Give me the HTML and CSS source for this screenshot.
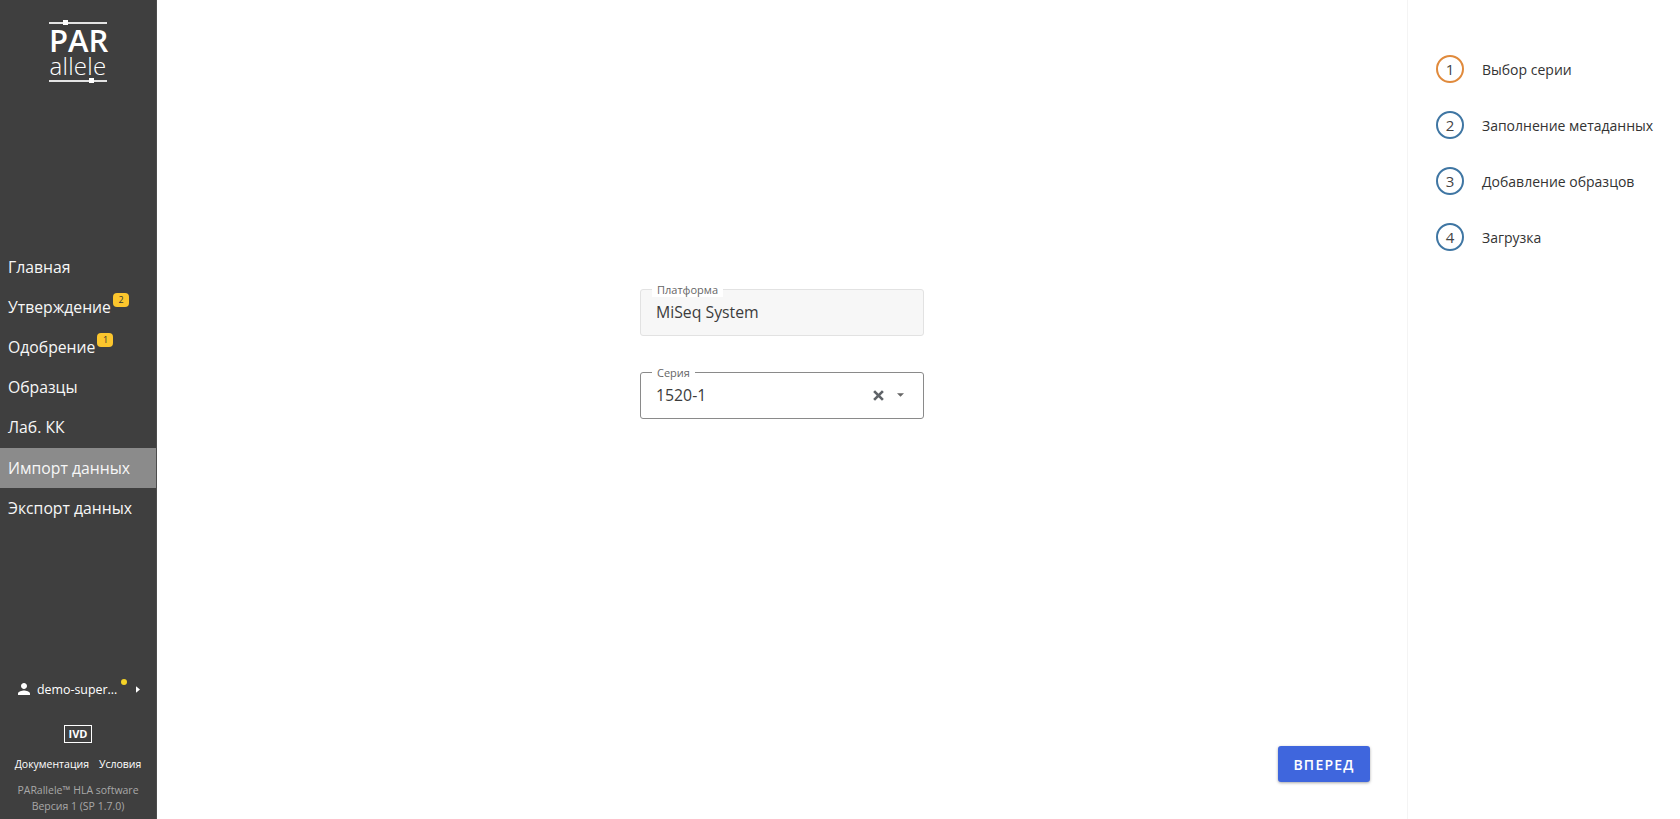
FILE: index.html
```html
<!DOCTYPE html>
<html lang="en">
<head>
  <meta charset="UTF-8">
  <title>PARallele</title>
  <link rel="stylesheet" href="styles.css">
</head>
<body>
  <div class="app">
    <!-- Sidebar -->
    <aside class="sidebar">
      <div class="logo">
        <div class="logo-line logo-line-top"><span class="logo-dot"></span></div>
        <div class="logo-par">PAR</div>
        <div class="logo-allele">allele</div>
        <div class="logo-line logo-line-bottom"><span class="logo-dot"></span></div>
      </div>

      <nav class="nav">
        <a class="nav-item">Главная</a>
        <a class="nav-item">Утверждение<span class="nav-badge">2</span></a>
        <a class="nav-item">Одобрение<span class="nav-badge">1</span></a>
        <a class="nav-item">Образцы</a>
        <a class="nav-item">Лаб. КК</a>
        <a class="nav-item nav-item-active">Импорт данных</a>
        <a class="nav-item">Экспорт данных</a>
      </nav>

      <div class="user">
        <svg class="user-icon" viewBox="0 0 24 24" width="18" height="18"><path fill="#fff" d="M12 12c2.2 0 4-1.8 4-4s-1.800-4-4-4-4 1.800-4 4 1.800 4 4 4zm0 2c-2.700 0-8 1.300-8 4v2h16v-2c0-2.700-5.300-4-8-4z"/></svg>
        <span class="user-name">demo-super...</span>
        <span class="user-dot"></span>
        <svg class="user-arrow" viewBox="0 0 6 10" width="4" height="7"><path fill="#fff" d="M0 0l6 5-6 5z"/></svg>
      </div>

      <div class="ivd">IVD</div>

      <div class="links">
        <a>Документация</a>
        <a>Условия</a>
      </div>

      <div class="about">
        <div>PARallele™ HLA software</div>
        <div>Версия 1 (SP 1.7.0)</div>
      </div>
    </aside>

    <!-- Main form -->
    <main class="main">
      <div class="form">
        <div class="field field-disabled">
          <span class="field-label">Платформа</span>
          <span class="field-value">MiSeq System</span>
        </div>
        <div class="field field-select">
          <span class="field-label">Серия</span>
          <span class="field-value">1520-1</span>
          <svg class="field-clear" viewBox="0 0 10 10" width="11" height="11"><path stroke="#5f6368" stroke-width="2.400" d="M1 1l8 8M9 1l-8 8"/></svg>
          <svg class="field-caret" viewBox="0 0 10 5" width="7" height="4"><path fill="#666" d="M0 0l5 5 5-5z"/></svg>
        </div>
      </div>
      <div class="actions">
        <button class="btn-next">ВПЕРЕД</button>
      </div>
    </main>

    <!-- Steps -->
    <aside class="steps">
      <div class="step step-current"><span class="step-num">1</span><span>Выбор серии</span></div>
      <div class="step"><span class="step-num">2</span><span>Заполнение метаданных</span></div>
      <div class="step"><span class="step-num">3</span><span>Добавление образцов</span></div>
      <div class="step"><span class="step-num">4</span><span>Загрузка</span></div>
    </aside>
  </div>
</body>
</html>
```

FILE: styles.css
```css
* {
  box-sizing: border-box;
}
body {
  margin: 0;
  font-family: "Open Sans", "Noto Sans", sans-serif;
  color: #333;
  background: #fff;
}
.app {
  display: flex;
  height: 819px;
  overflow: hidden;
}

.sidebar {
  width: 157px;
  flex-shrink: 0;
  background: #3f3f3f;
  color: #fff;
  display: flex;
  flex-direction: column;
  border-right: 1px solid #4d4d4d;
}
.logo {
  width: 58px;
  margin: 22px auto 0;
  height: 225px;
  color: #fff;
  text-align: center;
}
.logo-line {
  height: 2px;
  background: #e4e4e4;
  position: relative;
}
.logo-dot {
  position: absolute;
  width: 5px;
  height: 5px;
  top: -2px;
  background: #fff;
}
.logo-line-top .logo-dot {
  left: 14px;
}
.logo-line-bottom .logo-dot {
  left: 40px;
}
.logo-par {
  font-size: 31px;
  line-height: 28px;
  margin-top: 2px;
  font-weight: 600;
  white-space: nowrap;
}
.logo-allele {
  font-size: 24px;
  line-height: 20px;
  font-weight: 300;
  letter-spacing: 0.300px;
  margin-top: 2px;
  margin-bottom: 4px;
}

.nav {
  display: flex;
  flex-direction: column;
}
.nav-item {
  height: 40.200px;
  padding: 0 0 1px 8px;
  display: flex;
  align-items: center;
  font-size: 15.750px;
  color: #f7f7f7;
}
.nav-item-active {
  background: #8b8b8b;
}
.nav-badge {
  width: 16px;
  height: 14px;
  margin: -14px 0 0 2px;
  border-radius: 4px;
  background: #fcc62d;
  color: #333;
  font-size: 9px;
  line-height: 14px;
  text-align: center;
}

.user {
  margin-top: auto;
  display: flex;
  align-items: center;
  padding-left: 15px;
  height: 24px;
  font-size: 12.400px;
}
.user-name {
  margin-left: 4px;
}
.user-dot {
  width: 6px;
  height: 6px;
  border-radius: 50%;
  background: #f5d327;
  margin: -14px 0 0 4px;
}
.user-arrow {
  margin-left: 9px;
}
.ivd {
  width: 28px;
  height: 18px;
  margin: 24px auto 0;
  border: 1px solid #fff;
  font-size: 11px;
  font-weight: 700;
  line-height: 16px;
  text-align: center;
}
.links {
  display: flex;
  justify-content: center;
  gap: 10px;
  margin-top: 13px;
  font-size: 10.500px;
  font-weight: 400;
  line-height: 16px;
}
.about {
  margin-top: 10px;
  margin-bottom: 5px;
  color: #a8a8a8;
  font-size: 10.500px;
  line-height: 16px;
  text-align: center;
}

.main {
  flex: 1;
  display: flex;
  flex-direction: column;
  padding: 289px 37px 37px 0;
}
.form {
  width: 284px;
  margin-left: 483px;
  display: flex;
  flex-direction: column;
  gap: 36px;
}
.field {
  position: relative;
  height: 47px;
  border: 1px solid #8a8a8a;
  border-radius: 3px;
  display: flex;
  align-items: center;
  padding: 0 15px 1px;
  font-size: 15.800px;
}
.field-select {
  padding-right: 19px;
}
.field-disabled {
  background: #f7f7f7;
  border-color: #e2e2e2;
}
.field-label {
  position: absolute;
  top: -7px;
  left: 11px;
  padding: 0 5px;
  background: #fff;
  color: #666;
  font-size: 11px;
  line-height: 14px;
}
.field-value {
  flex: 1;
  color: #3c3c3c;
}
.field-clear {
  margin-right: 13px;
}
.actions {
  margin-top: auto;
  display: flex;
  justify-content: flex-end;
}
.btn-next {
  width: 92px;
  height: 36px;
  border: 0;
  border-radius: 3px;
  background: #3f66dd;
  color: #fff;
  font-family: inherit;
  font-size: 14px;
  font-weight: 600;
  letter-spacing: 1.200px;
  box-shadow: 0 1px 3px rgba(0, 0, 0, 0.35);
}

.steps {
  width: 273px;
  flex-shrink: 0;
  border-left: 1px solid #f4f4f4;
  padding: 55px 0 0 28px;
  display: flex;
  flex-direction: column;
  gap: 28px;
}
.step {
  display: flex;
  align-items: center;
  gap: 18px;
  font-size: 14px;
  color: #333;
}
.step-num {
  width: 28px;
  height: 28px;
  border: 2px solid #3f76a3;
  border-radius: 50%;
  display: flex;
  align-items: center;
  justify-content: center;
  color: #444;
  font-size: 15px;
}
.step-current .step-num {
  border-color: #e08a3c;
}
```
